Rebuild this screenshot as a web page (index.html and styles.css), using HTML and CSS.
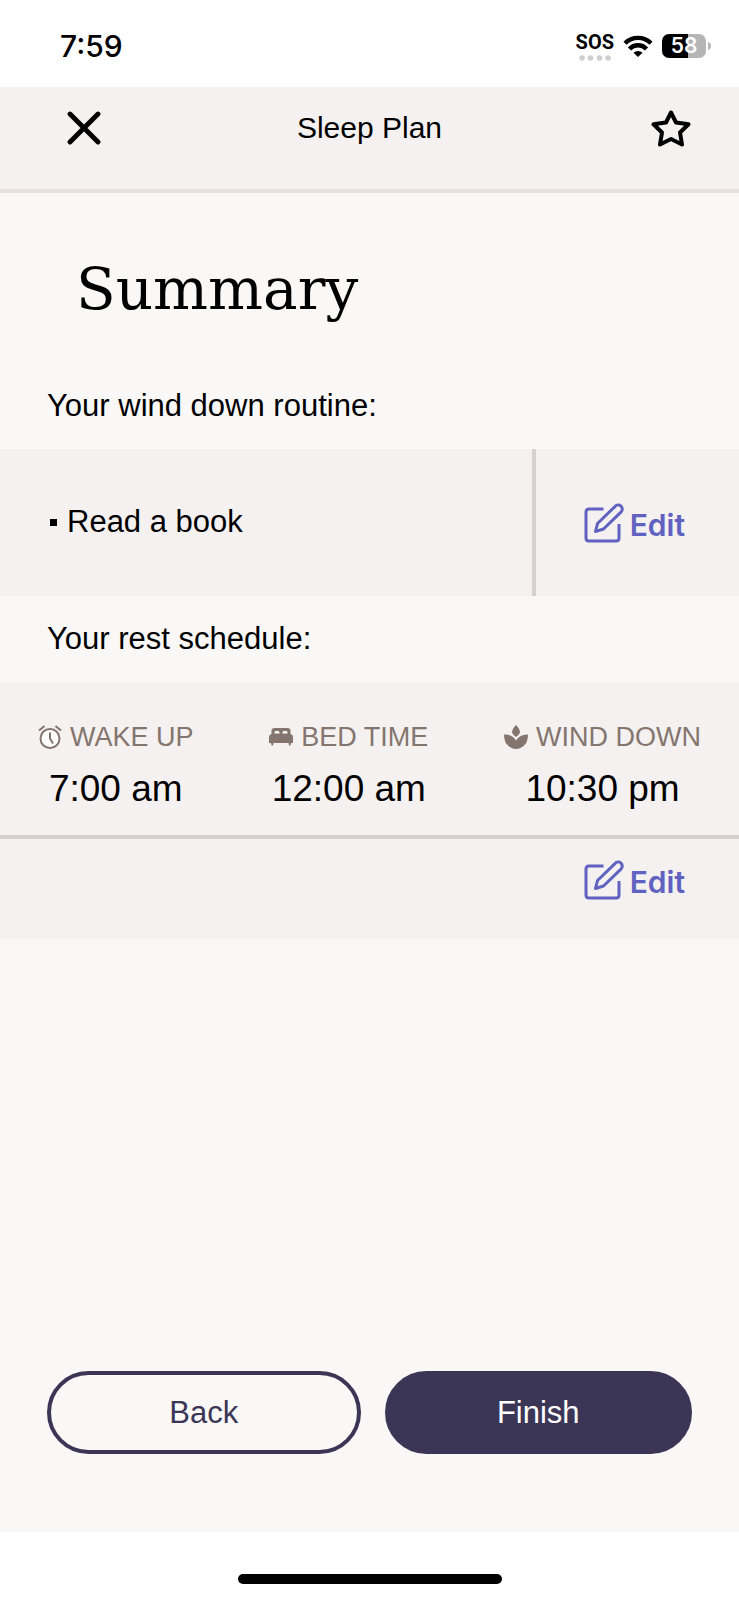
FILE: index.html
```html
<!DOCTYPE html>
<html lang="en">
<head>
<meta charset="utf-8">
<meta name="viewport" content="width=device-width, initial-scale=1">
<title>Sleep Plan</title>
<link rel="stylesheet" href="styles.css">
</head>
<body>
<div class="status">
  <span class="clock">7:59</span>
  <div class="signals">
    <div class="sos">
      <span class="sos-text">SOS</span>
      <svg width="32" height="6" viewBox="0 0 32 6" fill="#cfcfcf" aria-hidden="true"><circle cx="3" cy="3" r="2.800"/><circle cx="11.500" cy="3" r="2.800"/><circle cx="20.500" cy="3" r="2.800"/><circle cx="29" cy="3" r="2.800"/></svg>
    </div>
    <svg class="wifi" width="30" height="22" viewBox="0 0 30 22" fill="none" stroke="#000" stroke-width="4.400" aria-hidden="true"><path d="M2 8.200 A18.500 18.500 0 0 1 28 8.200"/><path d="M6.500 14 A11.500 11.500 0 0 1 23.500 14"/><path d="M15 22 L10.500 17.800 A6.500 6.500 0 0 1 19.500 17.800 Z" fill="#000" stroke="none"/></svg>
    <div class="battery"><span class="battery-level">58</span><svg class="battery-tip" width="3" height="8" viewBox="0 0 3 8" aria-hidden="true"><path d="M0 0 Q3 1 3 4 Q3 7 0 8Z" fill="#b5b5b5"/></svg></div>
  </div>
</div>

<header class="header">
  <button class="icon-button close" type="button" aria-label="Close">
    <svg width="34" height="34" viewBox="0 0 34 34" fill="none" stroke="#000" stroke-width="4.800" stroke-linecap="round" aria-hidden="true"><path d="M3 3 31 31M31 3 3 31"/></svg>
  </button>
  <span class="title">Sleep Plan</span>
  <button class="icon-button favorite" type="button" aria-label="Add to favorites">
    <svg width="40" height="40" viewBox="0 0 40 40" fill="none" stroke="#000" stroke-width="4" stroke-linejoin="round" aria-hidden="true"><path d="M20 4.500 25 14.500 37.500 16.300 29 24.500 31 36.500 20 31 9 36.500 11 24.500 2.500 16.300 15 14.500Z"/></svg>
  </button>
</header>

<main class="main">
  <h1 class="heading">Summary</h1>

  <h2 class="label">Your wind down routine:</h2>
  <section class="routine">
    <ul class="routine-list">
      <li class="routine-item">Read a book</li>
    </ul>
    <div class="routine-action">
      <button class="edit" type="button">
        <svg width="40" height="40" viewBox="0 0 40 40" fill="none" stroke="#5f62c0" stroke-width="3" stroke-linejoin="round" aria-hidden="true"><path d="M19.500 6H5Q2 6 2 9V35Q2 38 5 38H32Q35 38 35 35V21"/><path d="M11.500 28.500 13.500 20.500 31.200 3.300A3.900 3.900 0 0 1 37.200 8.800L19.500 26 11.500 28.500Z"/></svg>
        <span class="edit-text">Edit</span>
      </button>
    </div>
  </section>

  <h2 class="label">Your rest schedule:</h2>
  <section class="schedule">
    <dl class="times">
      <div class="slot">
        <dt class="slot-name">
          <svg width="24" height="24" viewBox="0 0 24 24" fill="none" stroke="#84756e" stroke-width="2" aria-hidden="true"><circle cx="12" cy="13.500" r="9.500" fill="#fff"/><path d="M1 5.500 6.500 1M23 5.500 17.500 1M12 7.500V13.500L15 18.500"/></svg>
          WAKE UP
        </dt>
        <dd class="slot-time">7:00 am</dd>
      </div>
      <div class="slot">
        <dt class="slot-name">
          <svg width="24" height="24" viewBox="0 0 24 24" fill="#84756e" aria-hidden="true"><path d="M2.500 9V6Q2.500 3 5.500 3H18.500Q21.500 3 21.500 6V9Q24 9.500 24 12V18H22L21.500 20.500H20L19.500 18H4.500L4 20.500H2.500L2 18H0V12Q0 9.500 2.500 9Z"/><path d="M5.500 8.500V7.500Q5.500 6 7 6H9Q10.500 6 10.500 7.500V8.500ZM13.500 8.500V7.500Q13.500 6 15 6H17Q18.500 6 18.500 7.500V8.500Z" fill="#fff"/></svg>
          BED TIME
        </dt>
        <dd class="slot-time">12:00 am</dd>
      </div>
      <div class="slot">
        <dt class="slot-name">
          <svg width="24" height="24" viewBox="0 0 24 24" fill="#84756e" aria-hidden="true"><path d="M12 0Q16 4 16 7.500 15 10 12 12 9 10 8 7.500 8 4 12 0Z"/><path d="M0 9.500Q8 9 12 15.500 16 9 24 9.500 24 18 19 21.500 15.500 24 12 24 8.500 24 5 21.500 0 18 0 9.500Z"/></svg>
          WIND DOWN
        </dt>
        <dd class="slot-time">10:30 pm</dd>
      </div>
    </dl>
    <div class="schedule-action">
      <button class="edit" type="button">
        <svg width="40" height="40" viewBox="0 0 40 40" fill="none" stroke="#5f62c0" stroke-width="3" stroke-linejoin="round" aria-hidden="true"><path d="M19.500 6H5Q2 6 2 9V35Q2 38 5 38H32Q35 38 35 35V21"/><path d="M11.500 28.500 13.500 20.500 31.200 3.300A3.900 3.900 0 0 1 37.200 8.800L19.500 26 11.500 28.500Z"/></svg>
        <span class="edit-text">Edit</span>
      </button>
    </div>
  </section>

  <div class="actions">
    <button class="button back" type="button">Back</button>
    <button class="button finish" type="button">Finish</button>
  </div>
</main>

<div class="home"><div class="home-bar"></div></div>
</body>
</html>
```
FILE: styles.css
```css
* {
  box-sizing: border-box;
}

body {
  margin: 0;
  min-height: 100vh;
  display: flex;
  flex-direction: column;
  background: #fff;
  color: #000;
  font-family: "Liberation Sans", Arial, sans-serif;
}

svg {
  display: block;
  flex: none;
}

button {
  margin: 0;
  padding: 0;
  border: 0;
  background: none;
  font: inherit;
  color: inherit;
  cursor: pointer;
}

.status {
  display: flex;
  justify-content: space-between;
  align-items: center;
  height: 87px;
  padding: 4px 28px 0 60px;
  font-family: Inter, sans-serif;
  font-weight: 600;
}

.clock {
  font-size: 30px;
  font-weight: 500;
  line-height: 40px;
}

.signals {
  display: flex;
  align-items: center;
  gap: 9px;
}

.sos {
  display: flex;
  flex-direction: column;
  align-items: center;
  gap: 3px;
  padding-top: 2px;
}

.sos-text {
  font-family: "Liberation Sans Narrow", Roboto, sans-serif;
  font-weight: 700;
  font-size: 20px;
  line-height: 20px;
}

.battery {
  display: flex;
  align-items: center;
  gap: 2px;
}

.battery-level {
  width: 44px;
  border-radius: 7px;
  background: linear-gradient(to right, #000 58%, #b5b5b5 58%);
  color: #fff;
  font-size: 21px;
  line-height: 24px;
  text-align: center;
}

.header {
  display: grid;
  grid-template-columns: 1fr auto 1fr;
  align-items: center;
  padding: 21px 48px 41px;
  border-bottom: 4px solid #e6e0df;
  background: #f5f1f0;
}

.icon-button {
  display: flex;
  align-items: center;
  justify-content: center;
  height: 40px;
}

.close {
  width: 72px;
}

.favorite {
  width: 40px;
  justify-self: end;
}

.title {
  font-size: 30px;
  line-height: 40px;
}

.main {
  flex: 1;
  display: flex;
  flex-direction: column;
  background: #f9f8f6;
}

.heading {
  margin: 0;
  padding: 60px 76px 38px;
  font-family: "DejaVu Serif", serif;
  font-weight: 400;
  font-size: 58px;
  line-height: 72px;
}

.label {
  margin: 0;
  padding: 23px 47px;
  font-weight: 400;
  font-size: 31px;
  line-height: 40px;
}

.routine {
  display: flex;
  min-height: 147px;
  background: #f5f1f0;
}

.routine-list {
  flex: 1;
  margin: 0;
  padding: 53px 50px;
  list-style: none;
  font-size: 31px;
  line-height: 40px;
}

.routine-item {
  display: flex;
  align-items: center;
  gap: 10px;
}

.routine-item::before {
  content: "";
  width: 7px;
  height: 7px;
  background: #000;
}

.routine-action {
  display: flex;
  align-items: center;
  justify-content: flex-end;
  width: 28%;
  padding-right: 54px;
  border-left: 4px solid #d7d0cd;
}

.edit {
  display: flex;
  align-items: center;
  gap: 6px;
  color: #5f62c0;
  font-family: Inter, sans-serif;
  font-weight: 600;
  font-size: 30px;
  line-height: 40px;
}

.edit-text {
  padding-top: 4px;
  line-height: 36px;
}

.schedule {
  background: #f5f1f0;
}

.times {
  display: flex;
  justify-content: space-between;
  margin: 0;
  padding: 35px 38px 22px;
  border-bottom: 4px solid #d7d0cd;
}

.slot {
  display: flex;
  flex-direction: column;
  align-items: center;
  gap: 8px;
}

.slot-name {
  display: flex;
  align-items: center;
  gap: 8px;
  color: #84756e;
  font-size: 27px;
  line-height: 40px;
}

.slot-time {
  margin: 0;
  font-size: 37px;
  line-height: 48px;
}

.schedule-action {
  display: flex;
  justify-content: flex-end;
  padding: 21px 54px 39px;
}

.actions {
  display: grid;
  grid-template-columns: 51fr 50fr;
  gap: 24px;
  margin-top: auto;
  padding: 48px 47px 78px;
}

.button {
  height: 83px;
  border: 4px solid #3b3556;
  border-radius: 42px;
  font-size: 31px;
  line-height: 40px;
}

.back {
  color: #3b3556;
}

.finish {
  background: #3b3556;
  color: #fff;
}

.home {
  display: flex;
  justify-content: center;
  padding: 42px 0 16px;
}

.home-bar {
  width: 264px;
  height: 10px;
  border-radius: 5px;
  background: #000;
}
```
